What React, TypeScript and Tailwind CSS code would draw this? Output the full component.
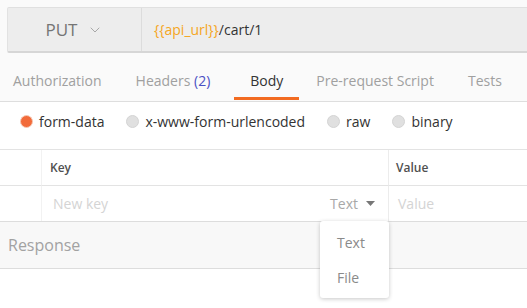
import { ChevronDown } from 'lucide-react';

const tabs = [
  { label: 'Authorization', gap: 'mr-[34px]' },
  { label: 'Headers', count: '(2)', gap: 'mr-[24px]' },
  { label: 'Body', active: true, gap: 'mr-[17px]' },
  { label: 'Pre-request Script', gap: 'mr-[34px]' },
  { label: 'Tests', gap: '' },
];

const bodyTypes = ['form-data', 'x-www-form-urlencoded', 'raw', 'binary'];

function Radio({ checked }: { checked?: boolean }) {
  return (
    <span
      className={`inline-block w-[13px] h-[13px] rounded-full border ${
        checked ? 'bg-[#f26b3a] border-[#f6c9b5]' : 'bg-[#e0e0e0] border-[#d4d4d4]'
      }`}
    />
  );
}

export default function App() {
  return (
    <div className="relative w-[527px] h-[308px] overflow-hidden bg-white font-['Open_Sans',sans-serif]">
      {/* Request bar */}
      <div className="bg-[#fafafa] pt-[7px]">
        <div className="ml-[7px] flex h-[46px] bg-[#ededed] border-t border-[#e0e0e0] border-b-2 border-b-[#d6d6d6] border-l border-l-[#e2e2e2] rounded-l-[2px]">
          <div className="w-[134px] flex items-center justify-center gap-[10px] border-r border-[#dcdcdc]">
            <span className="text-[17px] text-[#757575]">PUT</span>
            <ChevronDown className="w-[16px] h-[16px] text-[#a8a8a8]" strokeWidth={1.5} />
          </div>
          <div className="flex items-center pl-[12px] text-[14px]">
            <span className="text-[#f5a623]">{'{{api_url}}'}</span>
            <span className="text-[#333]">/cart/1</span>
          </div>
        </div>

        {/* Tabs */}
        <div className="flex h-[49px] border-b border-[#dedede] pl-[13px] text-[14px]">
          {tabs.map((tab) => (
            <div
              key={tab.label}
              className={`relative flex items-center ${tab.gap} ${
                tab.active ? 'px-[16px] text-[#333]' : 'text-[#a0a0a0]'
              }`}
            >
              <span className="mt-[6px]">
                {tab.label}
                {tab.count && <span className="text-[#4a4fc4]"> {tab.count}</span>}
              </span>
              {tab.active && (
                <span className="absolute left-0 right-0 bottom-[1px] h-[3px] bg-[#f26b21]" />
              )}
            </div>
          ))}
        </div>
      </div>

      {/* Body types */}
      <div className="flex items-center h-[48px] pb-[8px] pl-[20px] text-[14px] text-[#333] border-b border-[#e3e3e3]">
        {bodyTypes.map((t, i) => (
          <label key={t} className="flex items-center gap-[6px] mr-[22px]">
            <Radio checked={i === 0} />
            <span>{t}</span>
          </label>
        ))}
      </div>

      {/* Table */}
      <div className="grid grid-cols-[42px_346px_1fr] text-[12px]">
        <div className="h-[36px] border-r border-[#f2f2f2] border-b border-b-[#e3e3e3]" />
        <div className="h-[36px] flex items-center pl-[8px] font-semibold text-[#505050] border-b border-[#e3e3e3]">
          Key
        </div>
        <div className="h-[36px] flex items-center pl-[7px] font-semibold text-[#505050] border-l border-[#ececec] border-b border-b-[#e3e3e3]">
          Value
        </div>

        <div className="h-[35px] border-r border-[#f2f2f2]" />
        <div className="h-[35px] flex items-center justify-between pl-[11px] pr-[13px] text-[14px]">
          <span className="text-[#d4d4d4]">New key</span>
          <span className="flex items-center gap-[8px] text-[#a8a8a8]">
            Text
            <svg width="9" height="5" viewBox="0 0 9 5">
              <path d="M0 0h9L4.5 5z" fill="#777" />
            </svg>
          </span>
        </div>
        <div className="h-[35px] flex items-center pl-[9px] text-[14px] text-[#d4d4d4] border-l border-[#ececec]">
          Value
        </div>
      </div>

      {/* Response */}
      <div className="h-[48px] flex items-center pl-[8px] bg-[#f8f8f8] border-t border-b border-[#dddddd] text-[16px] text-[#a2a2a2]">
        Response
      </div>

      {/* Type dropdown */}
      <div className="absolute left-[320px] top-[221px] w-[69px] h-[77px] bg-white rounded-[3px] shadow-[0_1px_4px_rgba(0,0,0,0.22)] text-[14px] text-[#8a8a8a] flex flex-col pl-[17px] pt-[11px] gap-[14px]">
        <span>Text</span>
        <span>File</span>
      </div>
    </div>
  );
}
